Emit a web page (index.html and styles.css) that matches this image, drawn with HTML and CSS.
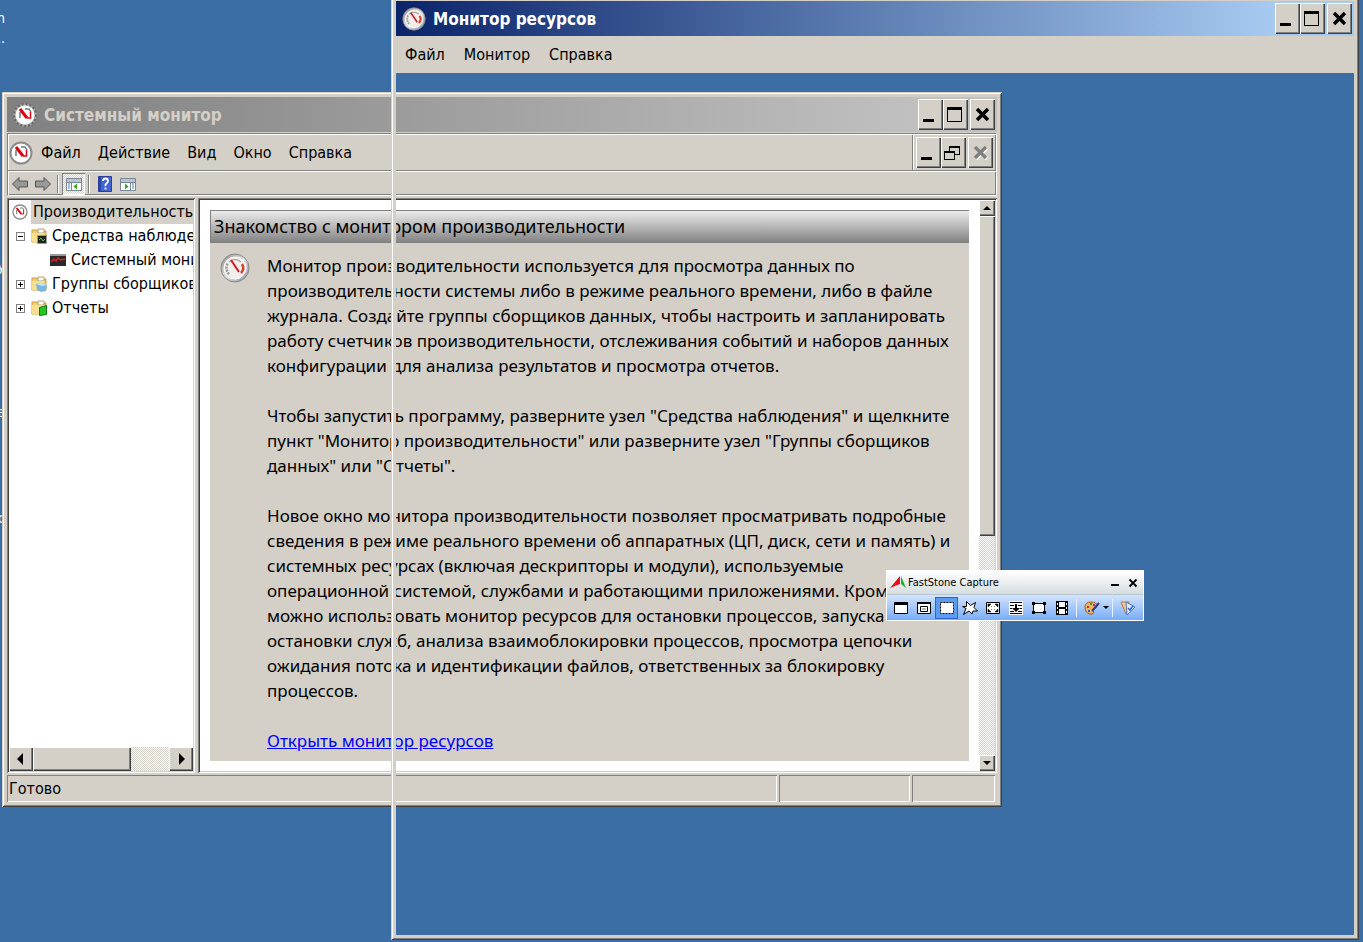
FILE: index.html
```html
<!DOCTYPE html>
<html lang="ru">
  <head>
    <meta charset="UTF-8" />
    <meta name="viewport" content="width=device-width, initial-scale=1.0" />
    <title>Системный монитор</title>
    <link rel="stylesheet" href="styles.css">
  </head>
  <body>
    <svg class="defs" width="0" height="0">
      <linearGradient id="rim" x1="0" y1="0" x2="1" y2="1">
        <stop offset="0" stop-color="#8a8a8a" />
        <stop offset="0.5" stop-color="#e4e4e4" />
        <stop offset="1" stop-color="#7f8a92" />
      </linearGradient>
      <symbol id="gauge" viewBox="0 0 30 30">
        <circle cx="15" cy="15" r="14" fill="url(#rim)" stroke="#888" />
        <circle cx="15" cy="15" r="11" fill="#f0efec" stroke="#fff" />
        <path d="M9 21A8.500 8.500 0 0 1 8 10" fill="none" stroke="#999" stroke-width="2.500" stroke-dasharray="2 1" />
        <path d="M9 9q6-5 12 0" fill="none" stroke="#aaa" stroke-width="1.500" />
        <path d="M22 11q3 5-1 9" fill="none" stroke="#d8402c" stroke-width="2.500" />
        <path d="M11 7l8 12" stroke="#d81818" stroke-width="2" />
      </symbol>
      <symbol id="gauge-small" viewBox="0 0 24 24">
        <circle cx="12" cy="12" r="10.500" fill="#fff" stroke="#8c8c8c" stroke-width="2" />
        <path d="M7 15V9M12 6h4l2 3" fill="none" stroke="#688078" stroke-width="1.500" />
        <path d="M7 6l7 9" stroke="#e00010" stroke-width="3" />
        <path d="M14 15h3.500V9" fill="none" stroke="#e00010" stroke-width="1.500" />
      </symbol>
      <symbol id="gauge-ticks" viewBox="0 0 24 24">
        <circle cx="12" cy="12" r="10.500" fill="#fff" stroke="#a8a8a8" stroke-width="2" />
        <circle cx="12" cy="12" r="11" fill="none" stroke="#666" stroke-width="2" stroke-dasharray="2 2" />
        <path d="M7 15V9M12 6h4l2 3" fill="none" stroke="#688078" stroke-width="1.500" />
        <path d="M7 6l7 9" stroke="#e00010" stroke-width="3" />
        <path d="M14 15h3.500V9" fill="none" stroke="#e00010" stroke-width="1.500" />
      </symbol>
      <symbol id="min" viewBox="0 0 21 27">
        <path d="M3 18h11v3H3z" />
      </symbol>
      <symbol id="max" viewBox="0 0 21 27">
        <path d="M2 6h15v15H2zm1 3v11h13V9z" fill-rule="evenodd" />
      </symbol>
      <symbol id="restore" viewBox="0 0 21 27">
        <path d="M6 7h11v9h-5v-1h4V9H7v3H6zM1 12h11v9H1zm1 2v6h9v-6z" fill-rule="evenodd" />
      </symbol>
      <symbol id="cross" viewBox="0 0 21 27">
        <path d="M5 8l11 11M16 8L5 19" fill="none" stroke="currentColor" stroke-width="3.500" />
      </symbol>
      <symbol id="folder" viewBox="0 0 16 16">
        <path d="M1 2h5l1 1h8v11H1z" fill="#f3d171" stroke="#c79c3c" />
        <path d="M7 1h6v4H7z" fill="#fff" stroke="#b0a070" />
        <path d="M1 5h12v9H1z" fill="#f8df91" />
      </symbol>
    </svg>

    <main class="desktop">
      <span class="label label1">Admin</span>
      <span class="label label2">...</span>
      <span class="label label3">Агент у</span>
      <span class="label label4">Сервер в</span>
      <span class="label label5">Обзор с</span>

      <section class="window sysmon">
        <header class="titlebar inactive">
          <svg class="app-icon"><use href="#gauge-ticks" /></svg>
          <h1>Системный монитор</h1>
          <button class="btn" aria-label="Свернуть"><svg><use href="#min" /></svg></button>
          <button class="btn" aria-label="Развернуть"><svg><use href="#max" /></svg></button>
          <button class="btn close" aria-label="Закрыть"><svg><use href="#cross" /></svg></button>
        </header>

        <div class="bars">
          <div class="menu-row">
            <nav class="menu">
              <svg class="app-icon"><use href="#gauge-small" /></svg>
              <button>Файл</button>
              <button>Действие</button>
              <button>Вид</button>
              <button>Окно</button>
              <button>Справка</button>
            </nav>
            <div class="mdi">
              <button class="btn" aria-label="Свернуть окно"><svg><use href="#min" /></svg></button>
              <button class="btn" aria-label="Восстановить окно"><svg><use href="#restore" /></svg></button>
              <button class="btn close" aria-label="Закрыть окно" disabled><svg><use href="#cross" /></svg></button>
            </div>
          </div>
          <div class="toolbar">
            <button aria-label="Назад">
              <svg viewBox="0 0 16 16"><path d="M.5 8L7 1.500V5h8.500v6H7v3.500z" fill="#999" stroke="#555" /></svg>
            </button>
            <button aria-label="Вперед">
              <svg viewBox="0 0 16 16"><path d="M15.500 8L9 1.500V5H.5v6H9v3.500z" fill="#999" stroke="#555" /></svg>
            </button>
            <i class="sep"></i>
            <button class="pressed" aria-label="Дерево консоли">
              <svg viewBox="0 0 16 16"><path d="M.5 2.500h15v12H.5z" fill="#fff" stroke="#7b8795" /><path d="M1 3h14v3H1z" fill="#b8c4d0" /><path d="M5.500 6v8M1 6.500h14" stroke="#7b8795" /><path d="M2 8h2M2 10h2M2 12h2" stroke="#4a78b8" /><path d="M11 7.500v6L7.500 10.500z" fill="#35a820" /></svg>
            </button>
            <i class="sep"></i>
            <button aria-label="Справка">
              <svg viewBox="0 0 16 16"><path d="M1.500 0.500h13v15h-13z" fill="#4064d0" stroke="#2b3f98" /><path d="M2 1h2v14H2z" fill="#2746a4" /><path d="M6 5q0-2.500 2.500-2.500T11 5q0 1.500-1.500 2.500T8.500 10M8.500 11.500v2" fill="none" stroke="#fff" stroke-width="1.800" /></svg>
            </button>
            <button aria-label="Панель действий">
              <svg viewBox="0 0 16 16"><path d="M.5 2.500h15v12H.5z" fill="#fff" stroke="#7b8795" /><path d="M1 3h14v3H1z" fill="#b8c4d0" /><path d="M10.500 6v8M1 6.500h14" stroke="#7b8795" /><path d="M12 8h2M12 10h2M12 12h2" stroke="#4a78b8" /><path d="M5 7.500v6l3.500-3z" fill="#35a820" /></svg>
            </button>
          </div>
        </div>

        <div class="panes">
          <aside class="pane tree">
            <ul>
              <li>
                <svg viewBox="0 0 24 24"><use href="#gauge-small" /></svg>
                <span class="selected">Производительность</span>
              </li>
              <li class="level1">
                <button class="toggle" aria-label="Свернуть узел"><svg viewBox="0 0 9 9"><path d="M2 4.500h5" stroke="#000" /></svg></button>
                <svg viewBox="0 0 16 16"><use href="#folder" /><path d="M6.500 7.500h9v8h-9z" fill="#222" stroke="#999" /><path d="M8 12l2-2 2 3 2-2" fill="none" stroke="#4cd040" /></svg>
                <span>Средства наблюдения</span>
              </li>
              <li class="level2">
                <svg viewBox="0 0 16 16"><path d="M0 2h16v12H0z" fill="#292929" /><path d="M0 2h16v2H0z" fill="#999" /><path d="M1 10l3-3 2 2 2-3 3 2 4-1" fill="none" stroke="#e02020" stroke-width="1.500" /></svg>
                <span>Системный монитор</span>
              </li>
              <li class="level1">
                <button class="toggle" aria-label="Развернуть узел"><svg viewBox="0 0 9 9"><path d="M2 4.500h5M4.500 2v5" stroke="#000" /></svg></button>
                <svg viewBox="0 0 16 16"><use href="#folder" /><path d="M5 8l6-1 5 2-1 6-5 1-4-2z" fill="#78b8dc" /><path d="M5 8l6-1 5 2-5 1z" fill="#c4e8f8" /></svg>
                <span>Группы сборщиков данных</span>
              </li>
              <li class="level1">
                <button class="toggle" aria-label="Развернуть узел"><svg viewBox="0 0 9 9"><path d="M2 4.500h5M4.500 2v5" stroke="#000" /></svg></button>
                <svg viewBox="0 0 16 16"><use href="#folder" /><path d="M8.500 7.500l7-2v9l-7 1z" fill="#20c820" stroke="#107810" /></svg>
                <span>Отчеты</span>
              </li>
            </ul>
            <div class="scroll horizontal">
              <button class="btn" aria-label="Влево"><svg viewBox="0 0 12 12"><path d="M8 0v12L2 6z" /></svg></button>
              <div class="thumb"></div>
              <button class="btn" aria-label="Вправо"><svg viewBox="0 0 12 12"><path d="M4 0v12l6-6z" /></svg></button>
            </div>
          </aside>

          <div class="pane content">
            <article>
              <h2>Знакомство с монитором производительности</h2>
              <div class="intro">
                <svg class="big-gauge"><use href="#gauge" /></svg>
                <div class="text">
                  <p>Монитор производительности используется для просмотра данных по<br>
                    производительности системы либо в режиме реального времени, либо в файле<br>
                    журнала. Создайте группы сборщиков данных, чтобы настроить и запланировать<br>
                    работу счетчиков производительности, отслеживания событий и наборов данных<br>
                    конфигурации для анализа результатов и просмотра отчетов.</p>
                  <p>Чтобы запустить программу, разверните узел "Средства наблюдения" и щелкните<br>
                    пункт "Монитор производительности" или разверните узел "Группы сборщиков<br>
                    данных" или "Отчеты".</p>
                  <p>Новое окно монитора производительности позволяет просматривать подробные<br>
                    сведения в режиме реального времени об аппаратных (ЦП, диск, сети и память) и<br>
                    системных ресурсах (включая дескрипторы и модули), используемые<br>
                    операционной системой, службами и работающими приложениями. Кроме<br>
                    можно использовать монитор ресурсов для остановки процессов, запуска<br>
                    остановки служб, анализа взаимоблокировки процессов, просмотра цепочки<br>
                    ожидания потока и идентификации файлов, ответственных за блокировку<br>
                    процессов.</p>
                  <p><a href="#resmon">Открыть монитор ресурсов</a></p>
                </div>
              </div>
            </article>
            <div class="scroll vertical">
              <button class="btn" aria-label="Вверх"><svg viewBox="0 0 8 8"><path d="M0 6h8L4 2z" /></svg></button>
              <div class="thumb"></div>
              <button class="btn" aria-label="Вниз"><svg viewBox="0 0 8 8"><path d="M0 2h8L4 6z" /></svg></button>
            </div>
          </div>
        </div>

        <footer class="status">
          <span>Готово</span>
          <span></span>
          <span></span>
        </footer>
      </section>

      <section class="window resmon" id="resmon">
        <header class="titlebar">
          <svg class="app-icon"><use href="#gauge" /></svg>
          <h1>Монитор ресурсов</h1>
          <button class="btn" aria-label="Свернуть"><svg><use href="#min" /></svg></button>
          <button class="btn" aria-label="Развернуть"><svg><use href="#max" /></svg></button>
          <button class="btn close" aria-label="Закрыть"><svg><use href="#cross" /></svg></button>
        </header>
        <nav class="menu">
          <button>Файл</button>
          <button>Монитор</button>
          <button>Справка</button>
        </nav>
      </section>

      <section class="capture">
        <header>
          <svg class="logo" viewBox="0 0 16 13"><path d="M0 12L10 0v8z" fill="#e8101c" /><path d="M11 0l5 12-5-4z" fill="#18b030" /></svg>
          <h1>FastStone Capture</h1>
          <button aria-label="Свернуть"><svg viewBox="0 0 10 10"><path d="M1 6h8v2H1z" /></svg></button>
          <button aria-label="Закрыть"><svg viewBox="0 0 10 10"><path d="M1.500 1.500l7 7M8.500 1.500l-7 7" stroke="#000" stroke-width="1.800" /></svg></button>
        </header>
        <div class="tools">
          <button aria-label="Активное окно"><svg viewBox="0 0 16 16"><path d="M1.500 2.500h13v11h-13z" fill="#fff" stroke="#000" /><path d="M1 2h14v3H1z" /></svg></button>
          <button aria-label="Окно или объект"><svg viewBox="0 0 16 16"><path d="M1.500 2.500h13v11h-13zM4.500 6.500h7v5h-7z" fill="#fff" stroke="#000" /><path d="M1 2h14v2H1z" /><path d="M6.500 8.500h3v1h-3z" fill="none" stroke="#aaa" /></svg></button>
          <button class="active" aria-label="Прямоугольная область"><svg viewBox="0 0 16 16"><path d="M1.500 2.500h13v11h-13z" fill="#fff" stroke="#000" stroke-dasharray="2 1" /></svg></button>
          <button aria-label="Произвольная область"><svg viewBox="0 0 16 16"><path d="M4.500 1.500l4 4 5-3-1.500 5 3.500 3.500H11L10 14 7 11l-5.500 3.500L4 8.500.5 6.500h4z" fill="#fff" stroke="#000" /></svg></button>
          <button aria-label="Весь экран"><svg viewBox="0 0 16 16"><path d="M1.500 2.500h13v11h-13z" fill="#fff" stroke="#000" /><path d="M3 4h3L3 7zM13 4v3l-3-3zM3 12V9l3 3zM13 12h-3l3-3zM6 6l1 1M10 6L9 7M6 10l1-1M10 10L9 9" stroke="#000" stroke-width=".5" /></svg></button>
          <button aria-label="Окно с прокруткой"><svg viewBox="0 0 16 16"><path d="M1 1h14v14H1z" fill="#fff" /><path d="M2 2.500h12M2 5.500h4M10 5.500h4M2 8.500h2M12 8.500h2M2 13.500h12M2 11.500h4M10 11.500h4" stroke="#000" /><path d="M7 4h2v4h3l-4 4-4-4h3z" /></svg></button>
          <button aria-label="Фиксированная область"><svg viewBox="0 0 16 16"><path d="M2.500 3.500h11v9h-11z" fill="#fff" stroke="#000" /><path d="M1 2h3v3H1zM12 2h3v3h-3zM1 11h3v3H1zM12 11h3v3h-3z" /></svg></button>
          <button aria-label="Запись видео"><svg viewBox="0 0 16 16"><path d="M2 1h12v14H2z" /><path d="M5 2h6v5H5zM5 9h6v5H5zM3 3h1v2H3zM3 7h1v2H3zM3 11h1v2H3zM12 3h1v2h-1zM12 7h1v2h-1zM12 11h1v2h-1z" fill="#fff" /></svg></button>
          <i class="line"></i>
          <button aria-label="Вывод"><svg viewBox="0 0 16 16"><path d="M1 7Q1 2 7 2q6 0 6 4 0 2-3 3t0 3q-1 3-4 2-5-1-5-7z" fill="#f2b45c" stroke="#a06020" /><path d="M3 6h2v2H3z" fill="#e02020" /><path d="M6 3h2v2H6z" fill="#28a030" /><path d="M4 10h2v2H4z" fill="#2050e0" /><path d="M9 4h2v2H9z" fill="#9030c0" /><path d="M15 3L8 11" stroke="#304080" stroke-width="2" /></svg></button>
          <svg class="arrow" viewBox="0 0 6 4"><path d="M0 0h6L3 3z" /></svg>
          <i class="line"></i>
          <button aria-label="Настройки"><svg viewBox="0 0 16 16"><path d="M1 2l8 0-3 12z" fill="#f3c890" stroke="#b07840" /><path d="M6 2l9 5-8 8z" fill="#dceaff" stroke="#5878b8" /><path d="M8 8l2 2 3-4" fill="none" stroke="#3068d0" stroke-width="1.500" /></svg></button>
        </div>
      </section>
    </main>
  </body>
</html>
```
FILE: styles.css
```css
* {
  box-sizing: border-box;
}
body {
  margin: 0;
  font-family: "DejaVu Sans Condensed", "Noto Sans", sans-serif;
  font-size: 16px;
  color: #000;
}
h1,
h2,
p,
ul {
  margin: 0;
  padding: 0;
}
svg {
  display: block;
  flex: none;
}
button {
  margin: 0;
  padding: 0;
  border: none;
  background: none;
  font: inherit;
  color: inherit;
}
.defs {
  position: absolute;
}
.desktop {
  position: relative;
  height: 100vh;
  overflow: hidden;
  background: #3a6ea5;
}

/* desktop icon captions that stick out from under the left edge */
.label {
  position: absolute;
  right: calc(100% - 5px);
  color: #fff;
  font-size: 14px;
  line-height: 20px;
  white-space: nowrap;
}
.label1 {
  top: 8px;
}
.label2 {
  top: 28px;
}
.label3 {
  top: 256px;
}
.label4 {
  top: 402px;
}
.label5 {
  top: 508px;
}

/* windows */
.window {
  position: absolute;
  display: flex;
  flex-direction: column;
  padding: 5px;
  box-shadow: inset 1px 1px #d4d0c8, inset -1px -1px #404040,
    inset 2px 2px #fff, inset -2px -2px #808080, inset 0 0 0 5px #d4d0c8;
}
.sysmon {
  left: 2px;
  right: 361px;
  top: 92px;
  bottom: 135px;
  background: #d4d0c8;
}
.resmon {
  left: 391px;
  right: 4px;
  top: -4px;
  bottom: 2px;
}
.titlebar {
  display: flex;
  align-items: center;
  height: 35px;
  padding: 0 2px 0 6px;
  background: linear-gradient(to right, #0a246a, #a6caf0 calc(100% - 80px));
  color: #fff;
}
.titlebar.inactive {
  background: linear-gradient(to right, #808080, #c0c0c0 calc(100% - 80px));
  color: #d4d0c8;
}
.titlebar h1 {
  flex: 1;
  margin-left: 7px;
  font-size: 17px;
  line-height: 24px;
  white-space: nowrap;
}
.app-icon {
  width: 24px;
  height: 24px;
}
.btn {
  display: flex;
  align-items: center;
  justify-content: center;
  width: 25px;
  height: 31px;
  flex: none;
  background: #d4d0c8;
  color: #000;
  box-shadow: inset 1px 1px #fff, inset -1px -1px #404040,
    inset -2px -2px #808080;
}
.btn svg {
  width: 21px;
  height: 27px;
}
.btn:disabled svg {
  color: #808080;
  filter: drop-shadow(1px 1px #fff);
}
.close {
  margin-left: 2px;
}

/* menus and toolbar */
.menu {
  display: flex;
  align-items: center;
  height: 37px;
  padding-left: 9px;
  gap: 19px;
  background: #d4d0c8;
}
.menu button {
  line-height: 24px;
  white-space: nowrap;
}
.bars {
  margin-top: 1px;
  margin-bottom: 2px;
  border: 1px solid #808080;
  border-right-color: #fff;
  border-bottom-color: #fff;
  box-shadow: inset 1px 1px #fff, inset -1px -1px #808080;
}
.menu-row {
  display: flex;
  height: 37px;
  border-bottom: 1px solid #808080;
}
.menu-row .menu {
  flex: 1;
  gap: 17px;
  margin: 1px 0 0 1px;
  height: 35px;
  padding-left: 0;
  border-right: 1px solid #808080;
}
.menu-row .app-icon {
  margin-right: -9px;
}
.mdi {
  display: flex;
  align-items: center;
  padding: 0 3px 0 2px;
  border-left: 1px solid #fff;
}
.toolbar {
  display: flex;
  align-items: center;
  height: 24px;
  border-top: 1px solid #fff;
}
.toolbar button {
  display: flex;
  align-items: center;
  justify-content: center;
  width: 23px;
  height: 22px;
}
.toolbar svg {
  width: 16px;
  height: 16px;
}
.toolbar .pressed {
  background: repeating-conic-gradient(#fff 0 25%, #d4d0c8 0 50%) 0 0 / 2px 2px;
  box-shadow: inset 1px 1px #808080, inset -1px -1px #fff;
}
.sep {
  width: 2px;
  height: 18px;
  margin: 0 3px;
  border-left: 1px solid #808080;
  border-right: 1px solid #fff;
}

/* panes */
.panes {
  flex: 1;
  display: flex;
  gap: 3px;
  min-height: 0;
}
.pane {
  padding: 2px;
  background: #fff;
  box-shadow: inset 1px 1px #808080, inset -1px -1px #fff,
    inset 2px 2px #404040, inset -2px -2px #d4d0c8;
}
.tree {
  display: flex;
  flex-direction: column;
  width: 188px;
  flex: none;
}
.tree ul {
  flex: 1;
  overflow: hidden;
  list-style: none;
}
.tree li {
  display: flex;
  align-items: center;
  height: 24px;
  padding-left: 3px;
  white-space: nowrap;
}
.tree li > svg {
  width: 16px;
  height: 16px;
}
.tree span {
  padding: 0 5px;
  line-height: 24px;
}
.tree .selected {
  margin-left: 3px;
  padding: 0 2px;
  background: #d4d0c8;
}
.tree .level1 {
  padding-left: 7px;
}
.tree .level2 {
  padding-left: 41px;
}
.toggle {
  width: 9px;
  height: 9px;
  margin-right: 6px;
  border: 1px solid #808080;
}
.toggle svg {
  width: 9px;
  height: 9px;
  margin: -1px;
}

.scroll {
  display: flex;
  justify-content: flex-start;
  background: repeating-conic-gradient(#fff 0 25%, #d4d0c8 0 50%) 0 0 / 2px 2px;
}
.scroll .btn:last-child {
  margin-left: auto;
}
.thumb {
  background: #d4d0c8;
  box-shadow: inset 1px 1px #fff, inset -1px -1px #404040,
    inset -2px -2px #808080;
}
.horizontal {
  height: 24px;
}
.horizontal .btn {
  width: 24px;
  height: 24px;
}
.horizontal svg {
  width: 12px;
  height: 12px;
}
.horizontal .thumb {
  width: 53%;
}
.vertical {
  flex-direction: column;
  width: 16px;
  flex: none;
}
.vertical .btn {
  width: 16px;
  height: 16px;
}
.vertical .btn:last-child {
  margin: auto 0 0;
}
.vertical svg {
  width: 8px;
  height: 8px;
}
.vertical .thumb {
  height: 56%;
}

.content {
  flex: 1;
  display: flex;
  min-width: 0;
}
.content article {
  flex: 1;
  min-width: 0;
  margin: 10px;
  background: #d4d0c8;
  font-family: "Noto Sans", sans-serif;
  font-size: 17px;
  line-height: 25px;
  overflow: hidden;
}
.content h2 {
  height: 33px;
  padding: 3px;
  border-top: 1px solid #808080;
  border-left: 1px solid #808080;
  background: linear-gradient(#ececec, #808080);
  font-size: 18px;
  font-weight: normal;
  white-space: nowrap;
}
.intro {
  display: flex;
  gap: 17px;
  padding: 10px 10px 0;
}
.big-gauge {
  width: 30px;
  height: 30px;
}
.text {
  white-space: nowrap;
}
.text p {
  margin-bottom: 25px;
}
.text a {
  color: #00f;
}

.status {
  display: flex;
  gap: 2px;
  height: 27px;
  margin-top: 2px;
  padding-right: 2px;
}
.status span {
  width: 83px;
  padding-left: 2px;
  line-height: 27px;
  box-shadow: inset 1px 1px #808080, inset -1px -1px #fff;
}
.status span:nth-child(1) {
  flex: 1;
}
.status span:nth-child(2) {
  width: 131px;
}

/* floating capture panel */
.capture {
  position: absolute;
  left: 886px;
  top: 570px;
  width: 258px;
  border: 1px solid #fff;
}
.capture header {
  display: flex;
  align-items: center;
  height: 24px;
  padding: 0 1px 0 3px;
  background: linear-gradient(#fff, #d5dde0);
  border-bottom: 1px solid #b4c4d4;
}
.logo {
  width: 16px;
  height: 13px;
}
.capture h1 {
  flex: 1;
  margin-left: 2px;
  font-size: 11px;
  font-weight: normal;
  line-height: 16px;
}
.capture header button {
  width: 18px;
  height: 18px;
  padding: 4px;
}
.tools {
  display: flex;
  align-items: center;
  height: 25px;
  padding-left: 2px;
  background: linear-gradient(#d4e4fc, #78acf8);
}
.tools button {
  display: flex;
  align-items: center;
  justify-content: center;
  width: 23px;
  height: 22px;
}
.tools button svg {
  width: 16px;
  height: 16px;
}
.tools .active {
  background: #5c9cf0;
  border: 1px solid #2c66c8;
}
.arrow {
  width: 6px;
  height: 4px;
}
.line {
  width: 1px;
  height: 18px;
  margin: 0 3px;
  background: #e8f2ff;
}
```
